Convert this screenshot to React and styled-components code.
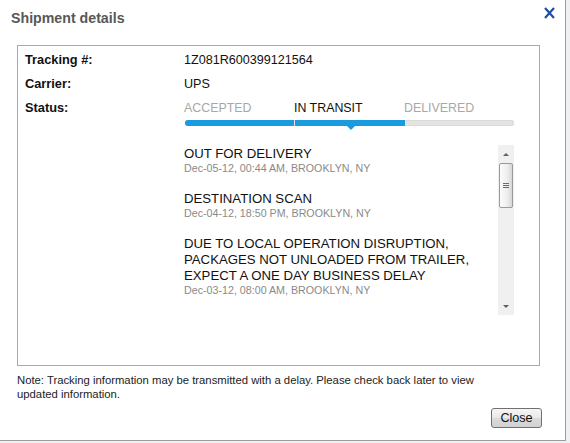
import styled, { createGlobalStyle } from 'styled-components';

const GlobalStyle = createGlobalStyle`
  html, body { margin: 0; padding: 0; }
  body {
    background: #eef0f2;
    font-family: "Liberation Sans", Arial, sans-serif;
  }
`;

const Dialog = styled.div`
  width: 566px;
  height: 441px;
  box-sizing: border-box;
  background: #fff;
  border-right: 1px solid #9c9c9c;
  border-bottom: 1px solid #9c9c9c;
  display: flex;
  flex-direction: column;
`;

const Header = styled.div`
  height: 45px;
  box-sizing: border-box;
  padding: 7px 10px 0 11px;
  display: flex;
  justify-content: space-between;
  align-items: flex-start;
`;

const Title = styled.h1`
  margin: 3px 0 0;
  font-size: 14.2px;
  line-height: 17px;
  font-weight: bold;
  color: #585858;
`;

const CloseX = styled.button`
  border: 0;
  padding: 0;
  background: none;
  width: 11px;
  height: 12px;
  cursor: pointer;
  svg { display: block; }
`;

const Body = styled.div`
  flex: 1;
  padding: 0 25px 0 17px;
  display: flex;
  flex-direction: column;
`;

const Box = styled.div`
  height: 321px;
  box-sizing: border-box;
  border: 1px solid #a9a9a9;
  padding: 6px 0 0 7px;
`;

const InfoGrid = styled.div`
  display: grid;
  grid-template-columns: 159px 330px;
  row-gap: 8px;
  font-size: 12.6px;
  line-height: 16px;
  color: #111;
`;

const Label = styled.div`
  font-weight: bold;
  font-size: 12.8px;
`;

const Value = styled.div``;

const Steps = styled.div`
  display: grid;
  grid-template-columns: 110px 110px 110px;
`;

const Step = styled.div`
  font-size: 12.4px;
  color: ${p => (p.$active ? '#111' : '#a8a8a8')};
`;

const Bar = styled.div`
  position: relative;
  margin-top: 4px;
  width: 329px;
  margin-left: 1px;
  height: 6px;
  border-radius: 3px;
  background: #e4e4e4;
  box-shadow: inset 0 0 0 1px #dadada;
  display: flex;
  gap: 1px;
`;

const Seg = styled.div`
  width: ${p => p.$w}px;
  height: 6px;
  background: #1a9be0;
  border-radius: ${p => (p.$first ? '3px 0 0 3px' : '0')};
`;

const Pointer = styled.div`
  position: absolute;
  left: 161px;
  top: 5px;
  width: 0;
  height: 0;
  border-left: 5px solid transparent;
  border-right: 5px solid transparent;
  border-top: 5px solid #1a9be0;
`;

const List = styled.div`
  margin-top: 19px;
  height: 170px;
  display: flex;
`;

const Events = styled.div`
  flex: 1;
  overflow: hidden;
  padding-top: 1px;
`;

const Event = styled.div`
  & + & { margin-top: 17px; }
`;

const EventTitle = styled.div`
  font-size: 13.2px;
  line-height: 16px;
  color: #111;
`;

const EventDate = styled.div`
  font-size: 10.7px;
  line-height: 12px;
  color: #8a8a8a;
`;

const Scrollbar = styled.div`
  width: 16px;
  background: #f0f0f0;
  display: flex;
  flex-direction: column;
  align-items: center;
`;

const Arrow = styled.div`
  height: 18px;
  width: 16px;
  display: flex;
  align-items: center;
  justify-content: center;
  &::before {
    content: "";
    border-left: 3px solid transparent;
    border-right: 3px solid transparent;
    ${p => (p.$down ? 'border-top: 3px solid #606060;' : 'border-bottom: 3px solid #606060;')}
  }
`;

const Thumb = styled.div`
  width: 14px;
  height: 45px;
  box-sizing: border-box;
  border: 1px solid #9a9a9a;
  border-radius: 2px;
  background: linear-gradient(90deg, #fbfbfb 0%, #eeeeee 60%, #d6d6d6 100%);
  display: flex;
  flex-direction: column;
  align-items: center;
  justify-content: center;
  gap: 1px;
`;

const Grip = styled.div`
  width: 6px;
  height: 1px;
  background: #6a6a6a;
`;

const Track = styled.div`
  flex: 1;
`;

const Note = styled.p`
  margin: 7px 0 0;
  max-width: 490px;
  font-size: 11.3px;
  line-height: 14px;
  color: #222;
`;

const Footer = styled.div`
  display: flex;
  justify-content: flex-end;
  margin-top: 7px;
  margin-right: -2px;
`;

const Button = styled.button`
  width: 51px;
  height: 20px;
  padding: 0;
  font-family: "Liberation Sans", Arial, sans-serif;
  font-size: 12.6px;
  color: #111;
  border: 1px solid #707070;
  border-radius: 3px;
  background: linear-gradient(180deg, #f6f6f6 0%, #e8e8e8 50%, #dadada 51%, #d2d2d2 100%);
`;

const events = [
  { title: ['OUT FOR DELIVERY'], date: 'Dec-05-12, 00:44 AM, BROOKLYN, NY' },
  { title: ['DESTINATION SCAN'], date: 'Dec-04-12, 18:50 PM, BROOKLYN, NY' },
  {
    title: [
      'DUE TO LOCAL OPERATION DISRUPTION,',
      'PACKAGES NOT UNLOADED FROM TRAILER,',
      'EXPECT A ONE DAY BUSINESS DELAY',
    ],
    date: 'Dec-03-12, 08:00 AM, BROOKLYN, NY',
  },
];

function App() {
  return (
    <>
      <GlobalStyle />
      <Dialog>
        <Header>
          <Title>Shipment details</Title>
          <CloseX aria-label="close">
            <svg width="11" height="12" viewBox="0 0 11 12">
              <path d="M1 1 L10 11 M10 1 L1 11" stroke="#1d4fa3" strokeWidth="2.2" fill="none" />
            </svg>
          </CloseX>
        </Header>
        <Body>
          <Box>
            <InfoGrid>
              <Label>Tracking #:</Label>
              <Value>1Z081R600399121564</Value>
              <Label>Carrier:</Label>
              <Value>UPS</Value>
              <Label>Status:</Label>
              <Value>
                <Steps>
                  <Step>ACCEPTED</Step>
                  <Step $active>IN TRANSIT</Step>
                  <Step>DELIVERED</Step>
                </Steps>
                <Bar>
                  <Seg $w={109} $first />
                  <Seg $w={110} />
                  <Pointer />
                </Bar>
                <List>
                  <Events>
                    {events.map((e, i) => (
                      <Event key={i}>
                        {e.title.map(t => (
                          <EventTitle key={t}>{t}</EventTitle>
                        ))}
                        <EventDate>{e.date}</EventDate>
                      </Event>
                    ))}
                  </Events>
                  <Scrollbar>
                    <Arrow />
                    <Thumb>
                      <Grip />
                      <Grip />
                      <Grip />
                    </Thumb>
                    <Track />
                    <Arrow $down />
                  </Scrollbar>
                </List>
              </Value>
            </InfoGrid>
          </Box>
          <Note>
            Note: Tracking information may be transmitted with a delay. Please check back later to view
            updated information.
          </Note>
          <Footer>
            <Button>Close</Button>
          </Footer>
        </Body>
      </Dialog>
    </>
  );
}

export default App;
